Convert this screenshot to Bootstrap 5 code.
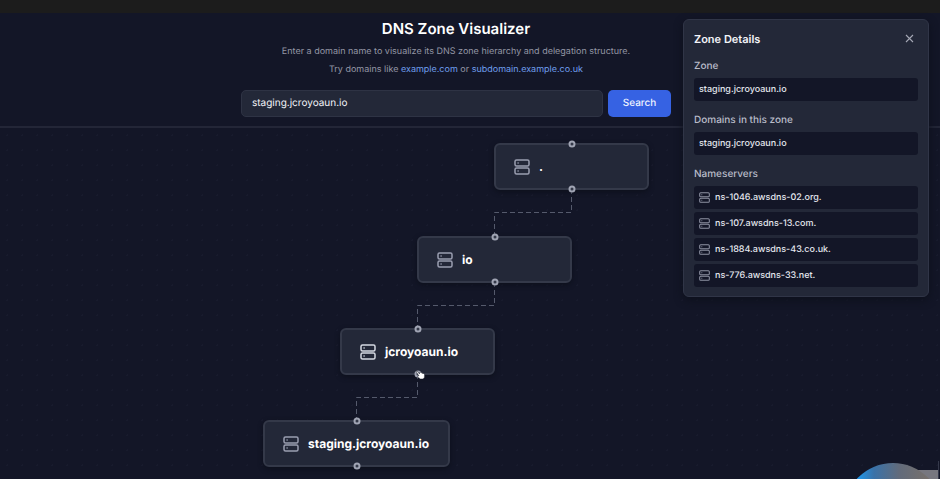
<!DOCTYPE html>
<html lang="en">
<head>
<meta charset="utf-8">
<meta name="viewport" content="width=device-width, initial-scale=1">
<title>DNS Zone Visualizer</title>
<link href="https://cdn.jsdelivr.net/npm/bootstrap@5.3.0/dist/css/bootstrap.min.css" rel="stylesheet">
<style>
body{background:#131627;color:#f3f4f8;font-family:Inter,sans-serif;font-size:10px;line-height:14px;text-rendering:geometricPrecision}
.topstrip{height:13px;background:#1c1c1c}
.intro{border-bottom:2px solid #232637;padding:6px 28px 9px 0}
.intro h1{font-size:15px;line-height:20px;font-weight:600;color:#fff;margin-bottom:6px}
.intro p{font-size:9px;line-height:14px;color:#9497a5;margin-bottom:4px}
.intro a{color:#6f9fee;text-decoration:none}
.search{max-width:430px;margin-top:13px;gap:5px}
.search .form-control{background:#232838;border:1px solid #2e3344;border-radius:5px;color:#f3f4f8;font-size:10px;line-height:17px;min-height:27px;padding:4px 10px;text-rendering:inherit}
.search .btn{background:#3662e3;border:0;border-radius:5px;color:#eef2ff;font-size:10px;font-weight:500;line-height:15px;padding:6px 0;min-width:63px;text-rendering:inherit}
.canvas{background-image:radial-gradient(circle,#181b2d 1px,transparent 1px);background-size:15px 15px}
.edges{left:0;top:0}
.node{background:#232838;border:2px solid #343949;border-radius:6px;width:155px;height:47px;padding:0 18px;gap:9px;font-size:12px;line-height:18px;font-weight:700;color:#fff;box-shadow:0 2px 5px #0d101c}
.node svg{color:#9a9eb0}
.node.hot svg{color:#d5d9e2}
.n-root{left:494px;top:15px}
.n-io{left:417px;top:108px}
.n-dom{left:340px;top:200px}
.n-stage{left:263px;top:292px;width:187px}
.port{width:7px;height:7px;border:2px solid #a0a4b3;border-radius:50%;background:#343949;left:50%}
.port.in{top:-1px}
.port.out{top:calc(100% + 1px)}
.pointer{left:415px;top:242px}
.details{right:11px;top:19px;width:246px;background:#232838;border:1px solid #303547;border-radius:6px;padding:10px 10px 9px;box-shadow:0 3px 8px #0d101c}
.details h2{font-size:11px;line-height:16px;font-weight:600;margin:0}
.details h3{font-size:10px;line-height:14px;font-weight:500;color:#b9bcc9;margin:12px 0 5px}
.details ul{gap:3px;margin:0}
.details li{background:#131627;border-radius:3px;height:23px;padding:0 5px;gap:5px;font-size:9px;font-weight:500;color:#e4e6ee}
.details li svg{color:#8e92a3}
.closer{background:none;border:0;padding:0;width:18px;height:17px;color:#a5a8b5}
.bubble{right:0;bottom:0}
</style>
</head>
<body>
<svg class="d-none" aria-hidden="true">
<symbol id="server" viewBox="0 0 16 16"><g fill="none" stroke="currentColor" stroke-width="1.500"><rect x="1" y="1" width="14" height="6" rx="1.500"/><rect x="1" y="9" width="14" height="6" rx="1.500"/><path d="M3.500 4h1.200M3.500 12h1.200"/></g></symbol>
</svg>
<div class="min-vh-100 d-flex flex-column position-relative overflow-hidden">
<div class="topstrip"></div>
<header class="intro text-center">
<h1 id="title">DNS Zone Visualizer</h1>
<p>Enter a domain name to visualize its DNS zone hierarchy and delegation structure.</p>
<p>Try domains like <a href="#">example.com</a> or <a href="#">subdomain.example.co.uk</a></p>
<form class="search d-flex mx-auto">
<input id="domain" class="form-control" type="text" value="staging.jcroyoaun.io" aria-label="Domain name">
<button class="btn" type="button">Search</button>
</form>
</header>
<main class="canvas flex-grow-1 position-relative">
<svg class="edges position-absolute" width="660" height="350" fill="none" stroke="#555a6c" stroke-width="1" stroke-dasharray="5 3" aria-hidden="true">
<path d="M571.5 61V84.5H494.5V107M494.5 154V177.500H417.500V200M417.500 246V269.500H356.500V292"/>
</svg>
<div class="node n-root position-absolute d-flex align-items-center"><i class="port in position-absolute translate-middle"></i><svg class="flex-shrink-0" width="16" height="16"><use href="#server"/></svg><span>.</span><i class="port out position-absolute translate-middle"></i></div>
<div class="node n-io position-absolute d-flex align-items-center"><i class="port in position-absolute translate-middle"></i><svg class="flex-shrink-0" width="16" height="16"><use href="#server"/></svg><span>io</span><i class="port out position-absolute translate-middle"></i></div>
<div class="node hot n-dom position-absolute d-flex align-items-center"><i class="port in position-absolute translate-middle"></i><svg class="flex-shrink-0" width="16" height="16"><use href="#server"/></svg><span>jcroyoaun.io</span><i class="port out position-absolute translate-middle"></i></div>
<div class="node n-stage position-absolute d-flex align-items-center"><i class="port in position-absolute translate-middle"></i><svg class="flex-shrink-0" width="16" height="16"><use href="#server"/></svg><span>staging.jcroyoaun.io</span><i class="port out position-absolute translate-middle"></i></div>
<svg class="pointer position-absolute" width="12" height="10" viewBox="0 0 12 10" aria-hidden="true"><path d="M1 1.500Q2 .5 3 2L4.500 4V2.500Q5.500 1.500 6 3Q7 2 7.500 3.500Q9 3 9.500 4.500Q10 8 8 9H5.500Q3 7.500 2.500 6.500Q3 5.500 4 6Z" fill="#fff" stroke="#1b1e2b" stroke-width=".5"/></svg>
</main>
<aside class="details position-absolute">
<div class="d-flex justify-content-between align-items-center"><h2>Zone Details</h2>
<button class="closer d-flex align-items-center justify-content-center" type="button" aria-label="Close"><svg width="9" height="9" viewBox="0 0 9 9" stroke="currentColor" stroke-width="1.100"><path d="M1 1L8 8M8 1L1 8"/></svg></button></div>
<h3>Zone</h3>
<ul class="list-unstyled d-flex flex-column"><li class="d-flex align-items-center">staging.jcroyoaun.io</li></ul>
<h3>Domains in this zone</h3>
<ul class="list-unstyled d-flex flex-column"><li class="d-flex align-items-center">staging.jcroyoaun.io</li></ul>
<h3>Nameservers</h3>
<ul class="list-unstyled d-flex flex-column">
<li class="d-flex align-items-center"><svg width="11" height="11"><use href="#server"/></svg>ns-1046.awsdns-02.org.</li>
<li class="d-flex align-items-center"><svg width="11" height="11"><use href="#server"/></svg>ns-107.awsdns-13.com.</li>
<li class="d-flex align-items-center"><svg width="11" height="11"><use href="#server"/></svg>ns-1884.awsdns-43.co.uk.</li>
<li class="d-flex align-items-center"><svg width="11" height="11"><use href="#server"/></svg>ns-776.awsdns-33.net.</li>
</ul>
</aside>
<svg class="bubble position-absolute" width="90" height="18" viewBox="0 0 90 18" aria-hidden="true">
<defs><linearGradient id="glow" gradientUnits="userSpaceOnUse" x1="6" y1="0" x2="78" y2="0"><stop offset="0" stop-color="#1d9af0"/><stop offset=".25" stop-color="#3a72a8"/><stop offset=".6" stop-color="#626b7b"/><stop offset="1" stop-color="#76706c"/></linearGradient></defs>
<path d="M66 9H88V18H66Z" fill="#77777f"/>
<circle cx="43" cy="51" r="49" fill="url(#glow)"/><path d="M88.500 0V18" stroke="#34384a"/>
</svg>
</div>
<script src="https://cdn.jsdelivr.net/npm/bootstrap@5.3.0/dist/js/bootstrap.bundle.min.js"></script>
</body>
</html>
